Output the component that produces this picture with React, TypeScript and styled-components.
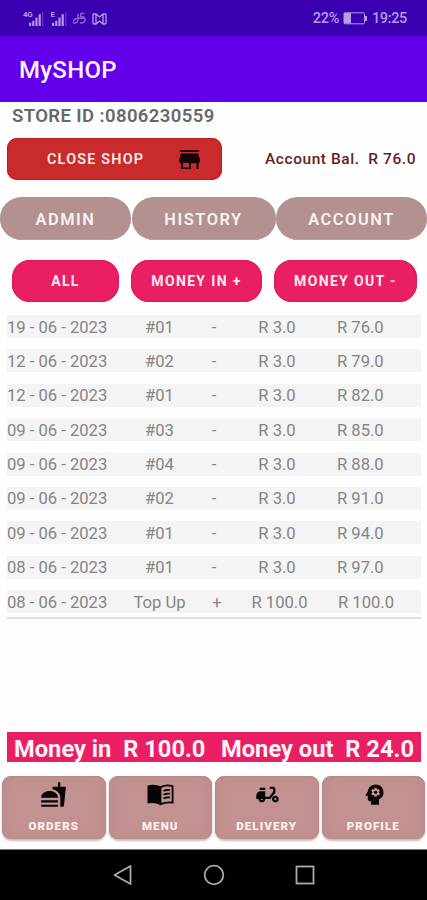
import React from 'react';
import styled, { createGlobalStyle } from 'styled-components';
import { MdFastfood, MdDeliveryDining, MdPsychology } from 'react-icons/md';

const Global = createGlobalStyle`
  * { box-sizing: border-box; }
  body { margin: 0; background: #fefefe; font-family: Roboto, sans-serif; }
  button { font-family: inherit; border: 0; padding: 0; margin: 0; }
`;
const Screen = styled.div`
  width: 427px; height: 900px; overflow: hidden;
  display: flex; flex-direction: column; background: #fefefe;
`;
const StatusBar = styled.header`
  height: 36px; flex: none; background: #3a00b2; color: #b39be6;
  display: flex; justify-content: space-between; align-items: center;
  padding: 1px 20px 0 23px;
`;
const StatusGroup = styled.div<{ $gap: number }>`
  display: flex; align-items: center; gap: ${p => p.$gap}px;
  font-size: 14.5px; font-weight: 500; letter-spacing: -0.35px;
  svg { display: block; }
`;
const AppBar = styled.div`
  height: 66px; flex: none; background: #6200ec; color: #f8f2ff;
  display: flex; align-items: center; padding: 2px 0 0 19px;
  font-size: 24px; font-weight: 500; letter-spacing: 0.3px;
`;
const StoreId = styled.div`
  height: 36px; flex: none; padding: 4px 0 0 12px; color: #686868;
  font-size: 18.5px; line-height: 21px; font-weight: 600; letter-spacing: 0.4px;
`;
const ShopRow = styled.div`
  height: 42px; flex: none; padding: 0 11px 0 7px;
  display: flex; align-items: center; justify-content: space-between;
`;
const CloseButton = styled.button`
  width: 215px; height: 42px; border-radius: 10px; background: #c92a2b; color: #fbeaea;
  box-shadow: inset 0 0 0 1px #c01d20;
  display: flex; align-items: center; justify-content: space-between; padding: 1px 21px 0 40px;
  font-size: 14.4px; font-weight: 600; letter-spacing: 1.2px;
`;
const Balance = styled.div`
  color: #6b1b1d; font-size: 15.5px; font-weight: 500; letter-spacing: 0.55px; white-space: pre;
`;
const Tabs = styled.nav`
  margin-top: 17px; height: 43px; flex: none;
  display: grid; grid-template-columns: 131px 144px 151px; gap: 0.5px;
`;
const Tab = styled.button`
  border-radius: 22px; background: #b29190; color: #faf3f2;
  box-shadow: inset 0 -1px 0 #b79d9c; padding: 1px 0 0 0;
  font-size: 16.4px; font-weight: 600; letter-spacing: 1.55px;
`;
const Filters = styled.div`
  margin: 20px 0 0 12px; height: 42px; flex: none;
  display: grid; grid-template-columns: 107px 131px 143px; gap: 12px;
`;
const Filter = styled.button`
  border-radius: 18px; background: #e91e63; color: #fdeaf1;
  box-shadow: inset 0 0 0 1px #e0185b; padding: 0;
  font-size: 14px; font-weight: 700; letter-spacing: 1.35px; white-space: nowrap;
`;
const Ledger = styled.section`
  margin: 13px 6px 0 7px; height: 304px; flex: none;
  display: flex; flex-direction: column; gap: 11.4px;
  border-bottom: 2px solid #dedede;
`;
const Entry = styled.div`
  height: 23px; flex: none; background: #f4f4f4; color: #858585;
  display: grid; grid-template-columns: 121px 63px 46px 80px 1fr; align-items: center;
  padding-top: 1px;
  font-size: 16.6px;
`;
const Cell = styled.span<{ $left?: boolean; $indent?: number }>`
  text-align: ${p => (p.$left ? 'left' : 'center')};
  padding-left: ${p => p.$indent ?? 0}px;
  white-space: nowrap;
`;
const Totals = styled.div`
  margin: 113px 6px 0 7px; height: 30px; flex: none; background: #e91e63; color: #fff3f8;
  display: flex; align-items: center; justify-content: space-between; padding: 4px 7px 0 7px;
  font-size: 23.7px; line-height: 26px; font-weight: 700; white-space: pre;
`;
const BottomNav = styled.nav`
  margin-top: 14px; height: 63px; flex: none; padding: 0 2px;
  display: grid; grid-template-columns: repeat(4, 1fr); gap: 3px;
`;
const NavButton = styled.button`
  border-radius: 9px; background: #c29291; color: #fdf0e9;
  box-shadow: 0 2px 2px #c9bcbc, inset 0 0 0 1px #b98a89, inset 0 0 9px 5px #be8e8d;
  display: flex; flex-direction: column; align-items: center; justify-content: space-between;
  padding: 3px 0 6px;
  font-size: 11.5px; line-height: 13px; font-weight: 900; letter-spacing: 1.1px;
  svg { color: #050304; display: block; }
`;
const IconBox = styled.span<{ $indent: number }>`
  height: 30px; display: flex; align-items: center; justify-content: center;
  padding-left: ${p => p.$indent}px;
`;
const SystemNav = styled.footer`
  margin-top: auto; height: 51px; flex: none; background: #000; border-top: 1px solid #777;
  display: flex; justify-content: center; align-items: center; gap: 69px;
`;

const rows = [
  ['19 - 06 - 2023', '#01', '-', 'R 3.0', 'R 76.0'],
  ['12 - 06 - 2023', '#02', '-', 'R 3.0', 'R 79.0'],
  ['12 - 06 - 2023', '#01', '-', 'R 3.0', 'R 82.0'],
  ['09 - 06 - 2023', '#03', '-', 'R 3.0', 'R 85.0'],
  ['09 - 06 - 2023', '#04', '-', 'R 3.0', 'R 88.0'],
  ['09 - 06 - 2023', '#02', '-', 'R 3.0', 'R 91.0'],
  ['09 - 06 - 2023', '#01', '-', 'R 3.0', 'R 94.0'],
  ['08 - 06 - 2023', '#01', '-', 'R 3.0', 'R 97.0'],
  ['08 - 06 - 2023', 'Top Up', '+', 'R 100.0', 'R 100.0'],
];

const NetLabel = styled.span`
  font-size: 8px; line-height: 8px; font-weight: 700; align-self: flex-start;
  letter-spacing: -0.3px; margin-right: -3px;
`;
const Signal = styled.span`
  display: flex; align-items: center; height: 15px;
`;
const SignalBars = () => (
  <svg width="15" height="15" viewBox="0 0 14 14" fill="currentColor">
    <path d="M0 11h2v3H0zM3 9h2v5H3zM6 6h2v8H6zM9 3h2v11H9z" />
    <path d="M12.3 1h1v13h-1z" opacity=".4" />
  </svg>
);
const Knot = () => (
  <svg width="13" height="13" viewBox="0 0 13 13" fill="none" stroke="currentColor" strokeWidth="1.4" opacity=".65">
    <path d="M5 1.5v5.5q0 4-3.5 4T1 8.5Q1 6.8 4 6.5T11.5 6M11.5 1.5H8Q6.5 5 9.5 5T12 8.5Q11 11.5 7 11" />
  </svg>
);
const Mail = () => (
  <svg width="15" height="12" viewBox="0 0 15 12" fill="none" stroke="currentColor" strokeWidth="1.3">
    <path d="M1 1.500Q1 1 2 1h2l3.500 3L11 1h2q1 0 1 .5v9q0 .5-1 .5h-2L7.500 8 4 11H2q-1 0-1-.5zM4 1v10M11 1v10" />
  </svg>
);
const Battery = () => (
  <svg width="25" height="13" viewBox="0 0 25 13">
    <rect x="1" y=".8" width="20.5" height="11" rx="1" fill="none" stroke="currentColor" />
    <path d="M1 1h7v10.5H1zM22 4h2v5h-2z" fill="currentColor" />
  </svg>
);
const Shop = () => (
  <svg width="23" height="21" viewBox="0 0 23 21" fill="#170506">
    <path fillRule="evenodd" d="M2.3 1h18.4v2H2.3zM3 4.5h17l2 6.5q.2 3-1.5 3.3V20h-2v-5.7H13V20H3v-5.7Q.8 14 1 11zM5 14v4.500h6V14z" />
  </svg>
);
const MenuBook = () => (
  <svg width="27" height="23" viewBox="0 0 27 23">
    <path fill="currentColor" d="M14 3.5Q7 .3 .5 2.700V20.500Q7 19 14 22z" />
    <path fill="none" stroke="currentColor" strokeWidth="1.8" d="M13.5 4.2Q19 1.2 25.6 3.2v16.4q-6-1-12.1 1.6z" />
    <path stroke="currentColor" strokeWidth="1.7" d="M16.5 8q3-1.5 6.5-1M16.5 11.7q3-1.5 6.5-1M16.5 15.4q3-1.5 6.5-1" fill="none" />
  </svg>
);

const nav = [
  { label: 'ORDERS', icon: <MdFastfood size={27} />, indent: 0 },
  { label: 'MENU', icon: <MenuBook />, indent: 1 },
  { label: 'DELIVERY', icon: <MdDeliveryDining size={27} />, indent: 1 },
  { label: 'PROFILE', icon: <MdPsychology size={27} />, indent: 2 },
];

export default function App() {
  return (
    <>
      <Global />
      <Screen>
        <StatusBar>
          <StatusGroup $gap={6}>
            <Signal><NetLabel>4G</NetLabel><SignalBars /></Signal>
            <Signal><NetLabel>E</NetLabel><SignalBars /></Signal>
            <Knot />
            <Mail />
          </StatusGroup>
          <StatusGroup $gap={4}><span>22%</span><Battery /><span>19:25</span></StatusGroup>
        </StatusBar>
        <AppBar>MySHOP</AppBar>
        <StoreId>STORE ID :0806230559</StoreId>
        <ShopRow>
          <CloseButton>CLOSE SHOP<Shop /></CloseButton>
          <Balance>{'Account Bal.  R 76.0'}</Balance>
        </ShopRow>
        <Tabs>
          <Tab>ADMIN</Tab><Tab>HISTORY</Tab><Tab>ACCOUNT</Tab>
        </Tabs>
        <Filters>
          <Filter>ALL</Filter><Filter>MONEY IN +</Filter><Filter>MONEY OUT -</Filter>
        </Filters>
        <Ledger>
          {rows.map(([date, item, sign, amount, balance], i) => {
            const credit = sign === '+';
            return (
              <Entry key={i}>
                <Cell $left>{date}</Cell>
                <Cell>{item}</Cell>
                <Cell $indent={credit ? 6 : 0}>{sign}</Cell>
                <Cell $indent={credit ? 5 : 0}>{amount}</Cell>
                <Cell $left $indent={credit ? 21 : 20}>{balance}</Cell>
              </Entry>
            );
          })}
        </Ledger>
        <Totals><span>{'Money in  R 100.0'}</span><span>{'Money out  R 24.0'}</span></Totals>
        <BottomNav>
          {nav.map(item => (
            <NavButton key={item.label}><IconBox $indent={item.indent}>{item.icon}</IconBox>{item.label}</NavButton>
          ))}
        </BottomNav>
        <SystemNav>
          <svg width="22" height="22" viewBox="0 0 22 22" fill="none" stroke="#aaa" strokeWidth="1.8"><path d="M18.5 2v18L2.5 11z" strokeLinejoin="round" /></svg>
          <svg width="22" height="22" viewBox="0 0 22 22" fill="none" stroke="#aaa" strokeWidth="1.8"><circle cx="11" cy="11" r="9.3" /></svg>
          <svg width="22" height="22" viewBox="0 0 22 22" fill="none" stroke="#aaa" strokeWidth="1.8"><rect x="2.5" y="2.5" width="17" height="17" /></svg>
        </SystemNav>
      </Screen>
    </>
  );
}
